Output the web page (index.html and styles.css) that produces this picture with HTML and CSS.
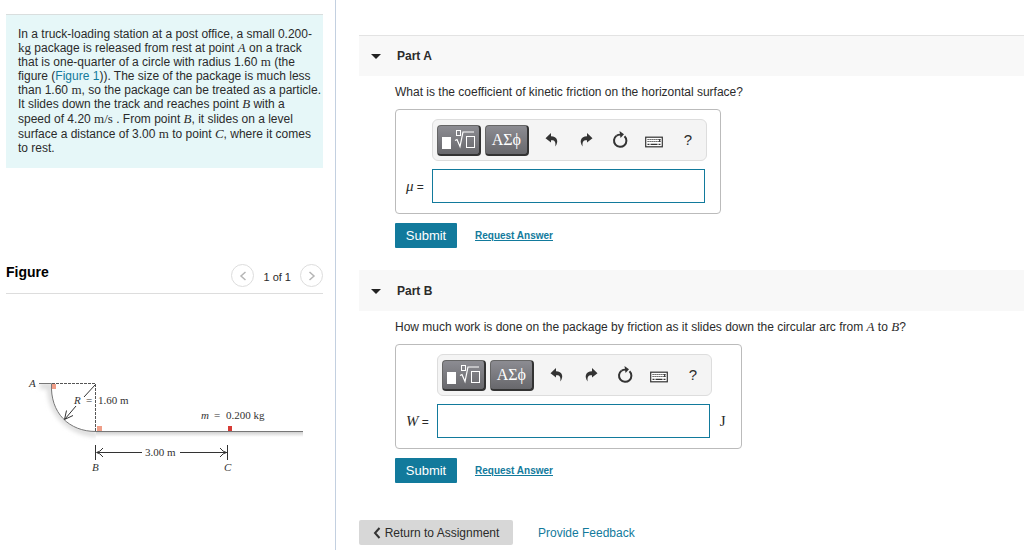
FILE: index.html
```html
<!DOCTYPE html>
<html lang="en">
<head>
<meta charset="utf-8">
<title>Assignment</title>
<meta name="viewport" content="width=device-width, initial-scale=1">
<link rel="stylesheet" href="styles.css">
</head>
<body>
<svg class="sprite" aria-hidden="true">
  <symbol id="i-root" viewBox="0 0 34 22">
    <rect x="1" y="8" width="9" height="12" fill="#fff"/>
    <rect x="15.500" y="1.500" width="4" height="5" fill="none" stroke="#fff"/>
    <path d="M14 11.500l2-1 3 7 3-14.500h11" fill="none" stroke="#fff" stroke-width="1.200"/>
    <rect x="25.500" y="7.500" width="8" height="11" fill="none" stroke="#fff"/>
  </symbol>
  <symbol id="i-undo" viewBox="0 0 14 16">
    <path d="M6 1L0.500 6.200L6 10.500V8.300C9.500 8 11 9.500 10.300 14.500C14 9.500 12.500 4.500 6 4.200Z" fill="#333"/>
  </symbol>
  <symbol id="i-reset" viewBox="0 0 16 18">
    <path d="M12.500 5.200A6.200 6.200 0 1 1 4.500 4.700" fill="none" stroke="#333" stroke-width="2"/>
    <path d="M4.500 4.700Q6 3.600 8.500 3.600" fill="none" stroke="#333" stroke-width="1.800"/>
    <path d="M7.500 0L12 3.300L8.500 7Z" fill="#333"/>
  </symbol>
  <symbol id="i-keys" viewBox="0 0 18 12">
    <rect x="0.700" y="1.200" width="16.600" height="9.600" fill="#fff" stroke="#333" stroke-width="1.200"/>
    <path d="M2.500 3.500h13M2.500 5.500h13" stroke="#333" stroke-width="1.100" stroke-dasharray="1.200 0.800"/>
    <path d="M2.500 8.300h2M5.500 8.300h7M13.500 8.300h2M14.700 3v3" stroke="#333" stroke-width="1.200"/>
  </symbol>
</svg>
<div class="page">
  <aside class="side">
    <section class="intro">
      <p>In a truck-loading station at a post office, a small 0.200-<br>
      <span class="math">kg</span> package is released from rest at point <i class="math">A</i> on a track<br>
      that is one-quarter of a circle with radius 1.60 <span class="math">m</span> (the<br>
      figure (<a href="#figure">Figure 1</a>)). The size of the package is much less<br>
      than 1.60 <span class="math">m</span>, so the package can be treated as a particle.<br>
      It slides down the track and reaches point <i class="math">B</i> with a<br>
      speed of 4.20 <span class="math tall">m/s</span> . From point <i class="math tall">B</i>, it slides on a level<br>
      surface a distance of 3.00 <span class="math tall">m</span> to point <i class="math tall">C</i>, where it comes<br>
      <span class="tall">to rest.</span></p>
    </section>
    <section class="figure" id="figure">
      <header class="figure-head">
        <h2>Figure</h2>
        <nav class="pager" aria-label="Figures">
          <button type="button" aria-label="Previous figure"><svg viewBox="0 0 8 12"><path d="M6.500 2L2 6l4.500 4"/></svg></button>
          <span>1 of 1</span>
          <button type="button" aria-label="Next figure"><svg viewBox="0 0 8 12"><path d="M1.500 2L6 6l-4.500 4"/></svg></button>
        </nav>
      </header>
      <svg class="diagram" viewBox="0 0 300 110" role="img" aria-label="Quarter-circle track from A to B and level track from B to C">
        <defs>
          <linearGradient id="ground" x1="0" y1="0" x2="0" y2="1">
            <stop offset="0" stop-color="#d0d0d0"/><stop offset="1" stop-color="#fff"/>
          </linearGradient>
          <filter id="soft" x="-20%" y="-20%" width="140%" height="140%"><feGaussianBlur stdDeviation="2"/></filter>
          <clipPath id="under"><path d="M10 14H31.500C30 43 49 61.500 76 61.500V75H10Z"/></clipPath>
        </defs>
        <g clip-path="url(#under)"><path d="M20 16H30C30 44 50 62 77 64" fill="none" stroke="#ddd" stroke-width="6" filter="url(#soft)"/></g>
        <rect x="76" y="62" width="207" height="5" fill="url(#ground)"/>
        <rect x="31" y="14" width="5" height="5" fill="#ef9e88"/>
        <rect x="77" y="56" width="5" height="5" fill="#ef9e88"/>
        <rect x="208" y="56" width="4" height="5" fill="#d63b36"/>
        <path d="M19 13.500H31.500C30 43 49 61.500 76 61.500H283" fill="none" stroke="#777"/>
        <path d="M32 13.500H76M75.500 14V61" fill="none" stroke="#555" stroke-dasharray="3 1"/>
        <path d="M75 15L64 27M56 36L45 49M53 45.500L44.500 49.500L46.500 40.500" fill="none" stroke="#333"/>
        <path d="M75.500 75V90M207.500 75V90M77 82.500H122M160 82.500H207M83 78Q80 82 76.500 82.500Q80 83 83 87M200 78Q203 82 206.500 82.500Q203 83 200 87" fill="none" stroke="#333"/>
        <g class="label">
          <text x="9" y="17" font-style="italic">A</text>
          <text x="54" y="34" font-style="italic">R</text>
          <text x="66" y="34">=</text>
          <text x="78" y="34">1.60 m</text>
          <text x="181" y="49" font-style="italic">m</text>
          <text x="194" y="49">=</text>
          <text x="206" y="49">0.200 kg</text>
          <text x="125" y="86">3.00 m</text>
          <text x="72" y="101" font-style="italic">B</text>
          <text x="204" y="101" font-style="italic">C</text>
        </g>
      </svg>
    </section>
  </aside>
  <main class="work">
    <section class="part first">
      <header class="part-head"><button type="button" class="fold" aria-label="Collapse Part A"></button><h2>Part A</h2></header>
      <form class="part-body">
        <p>What is the coefficient of kinetic friction on the horizontal surface?</p>
        <div class="answer">
          <div class="tools">
            <button type="button" class="dark" aria-label="Templates"><svg class="root"><use href="#i-root"/></svg></button>
            <button type="button" class="dark">ΑΣϕ</button>
            <button type="button" class="tool" aria-label="Undo"><svg class="undo"><use href="#i-undo"/></svg></button>
            <button type="button" class="tool" aria-label="Redo"><svg class="undo flip"><use href="#i-undo"/></svg></button>
            <button type="button" class="tool" aria-label="Reset"><svg class="reset"><use href="#i-reset"/></svg></button>
            <button type="button" class="tool" aria-label="Keyboard shortcuts"><svg class="keys"><use href="#i-keys"/></svg></button>
            <button type="button" class="tool" aria-label="Help">?</button>
          </div>
          <label for="mu"><i>μ</i> =</label>
          <input id="mu" type="text">
          <span class="unit"></span>
        </div>
        <div class="actions"><button type="submit">Submit</button><a href="#answer-a">Request Answer</a></div>
      </form>
    </section>
    <section class="part">
      <header class="part-head"><button type="button" class="fold" aria-label="Collapse Part B"></button><h2>Part B</h2></header>
      <form class="part-body">
        <p>How much work is done on the package by friction as it slides down the circular arc from <i class="math">A</i> to <i class="math">B</i>?</p>
        <div class="answer">
          <div class="tools">
            <button type="button" class="dark" aria-label="Templates"><svg class="root"><use href="#i-root"/></svg></button>
            <button type="button" class="dark">ΑΣϕ</button>
            <button type="button" class="tool" aria-label="Undo"><svg class="undo"><use href="#i-undo"/></svg></button>
            <button type="button" class="tool" aria-label="Redo"><svg class="undo flip"><use href="#i-undo"/></svg></button>
            <button type="button" class="tool" aria-label="Reset"><svg class="reset"><use href="#i-reset"/></svg></button>
            <button type="button" class="tool" aria-label="Keyboard shortcuts"><svg class="keys"><use href="#i-keys"/></svg></button>
            <button type="button" class="tool" aria-label="Help">?</button>
          </div>
          <label for="work"><i>W</i> =</label>
          <input id="work" type="text">
          <span class="unit">J</span>
        </div>
        <div class="actions"><button type="submit">Submit</button><a href="#answer-b">Request Answer</a></div>
      </form>
    </section>
    <footer class="foot">
      <button type="button"><svg viewBox="0 0 8 12"><path d="M6.500 1L2 6l4.500 5"/></svg>Return to Assignment</button>
      <a href="#feedback">Provide Feedback</a>
    </footer>
  </main>
</div>
</body>
</html>
```
FILE: styles.css
```css
* { box-sizing: border-box; }
body {
  margin: 0;
  background: #fff;
  color: #2b2b2b;
  font: 12px/14px "Liberation Sans", Arial, sans-serif;
}
h2, p { margin: 0; }
button, input { font: inherit; color: inherit; margin: 0; padding: 0; }
button { border: 0; background: none; cursor: pointer; }
a { color: #127a9c; text-decoration: none; }
.sprite { display: none; }

.page { display: flex; min-height: 100vh; }
.side {
  flex: 0 0 336px;
  padding: 14px 12px 0 6px;
  border-right: 1px solid #c3d0e0;
}
.work { flex: 1; min-width: 0; padding: 35px 0 0 23px; }

.math { font-family: "Liberation Serif", "Times New Roman", serif; font-size: 13px; }
.tall { line-height: 15px; }

.intro {
  padding: 12px 0 12px 12px;
  border-top: 1px solid #d9dede;
  background: #e6f7f8;
  white-space: nowrap;
}

.figure { padding-top: 96px; }
.figure-head {
  display: flex;
  align-items: center;
  justify-content: space-between;
  height: 30px;
  border-bottom: 1px solid #ddd;
}
.figure-head h2 { padding-bottom: 14px; color: #000; font-size: 14px; }
.pager { display: flex; align-items: center; gap: 9px; padding-bottom: 6px; font-size: 11px; }
.pager span { padding-top: 2px; }
.pager button {
  display: grid;
  place-items: center;
  width: 23px;
  height: 23px;
  border: 1px solid #ddd;
  border-radius: 50%;
}
.pager svg { width: 8px; height: 12px; fill: none; stroke: #b5b5b5; stroke-width: 1.5; }
.diagram { display: block; width: 300px; margin: 76px 0 0 14px; overflow: visible; }
.label { font: 11px "Liberation Serif", "Times New Roman", serif; fill: #333; }

.part { margin-bottom: 22px; }
.part-head {
  display: flex;
  align-items: center;
  gap: 16px;
  height: 41px;
  padding-left: 12px;
  border-top: 1px solid #f8f8f8;
  background: #f8f8f8;
}
.first .part-head { border-top-color: #e3e3e3; }
.part-head h2 { font-size: 12px; }
.fold {
  border: 5px solid transparent;
  border-top-color: #222;
  border-bottom: 0;
}
.part-body { padding: 9px 0 0 36px; }
.answer {
  display: grid;
  grid-template-columns: auto 275px auto;
  align-items: center;
  width: fit-content;
  margin-top: 10px;
  padding: 9px 13px 10px 10px;
  border: 1px solid #bbb;
  border-radius: 4px;
}
.tools {
  display: flex;
  align-items: center;
  grid-column: 2;
  height: 42px;
  margin-bottom: 8px;
  padding-left: 4px;
  border: 1px solid #ddd;
  border-radius: 6px;
  background: #f4f4f4;
}
.dark {
  display: grid;
  place-items: center;
  width: 44px;
  height: 31px;
  margin-right: 4px;
  border: 1px solid #666;
  border-right: 2px solid #333;
  border-bottom: 2px solid #333;
  border-radius: 4px;
  background: linear-gradient(#8c8c92, #68686c);
  color: #fff;
  font: 16px/20px "Liberation Serif", "Times New Roman", serif;
}
.dark + .tool { margin-left: 2px; }
.tool {
  display: grid;
  place-items: center;
  width: 34px;
  height: 31px;
  font-size: 15px;
}
.root { width: 34px; height: 22px; }
.undo { width: 14px; height: 16px; }
.flip { transform: scaleX(-1); }
.reset { width: 16px; height: 18px; }
.keys { width: 18px; height: 12px; margin-top: 4px; }
.answer label { grid-column: 1; padding-right: 8px; }
.answer label i, .unit { font: 15px/18px "Liberation Serif", "Times New Roman", serif; }
.answer label i { font-style: italic; }
.answer input {
  width: 273px;
  height: 34px;
  padding: 0 6px;
  border: 1px solid #127a9c;
  background: #fff;
}
.unit:not(:empty) { padding: 0 2px 0 8px; }
.actions { display: flex; align-items: center; gap: 18px; margin-top: 9px; }
.actions button {
  width: 62px;
  height: 25px;
  border-radius: 1px;
  background: #127a9c;
  color: #fff;
  font-size: 13px;
}
.actions a { font-size: 10px; font-weight: bold; text-decoration: underline; }

.foot { display: flex; align-items: center; gap: 25px; padding-top: 15px; }
.foot button {
  display: flex;
  align-items: center;
  justify-content: center;
  gap: 4px;
  width: 154px;
  height: 25px;
  border-radius: 2px;
  background: #d7d7d7;
}
.foot svg { width: 8px; height: 12px; fill: none; stroke: #333; stroke-width: 2; }
```
